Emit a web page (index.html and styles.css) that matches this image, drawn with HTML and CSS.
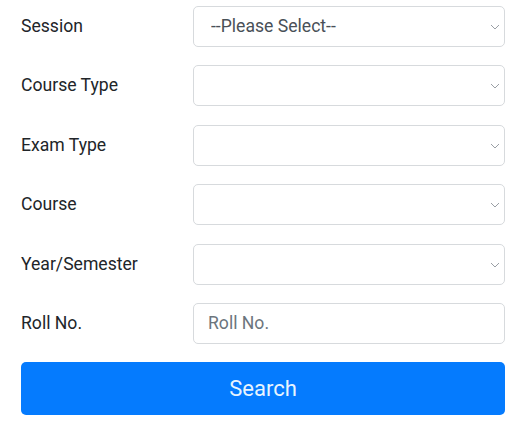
FILE: index.html
```html
<!DOCTYPE html>
<html>
<head>
<meta charset="utf-8">
<link rel="stylesheet" href="styles.css">
</head>
<body>
<form class="form">
  <label class="label" for="session">Session</label>
  <div class="select-wrap">
    <select id="session" class="control"><option>--Please Select--</option></select>
    <svg class="chev" width="10" height="6" viewBox="0 0 10 6"><path d="M1 1 L5 5 L9 1" fill="none" stroke="#9a9fa5" stroke-width="1"/></svg>
  </div>

  <label class="label" for="ctype">Course Type</label>
  <div class="select-wrap">
    <select id="ctype" class="control"><option></option></select>
    <svg class="chev" width="10" height="6" viewBox="0 0 10 6"><path d="M1 1 L5 5 L9 1" fill="none" stroke="#9a9fa5" stroke-width="1"/></svg>
  </div>

  <label class="label" for="etype">Exam Type</label>
  <div class="select-wrap">
    <select id="etype" class="control"><option></option></select>
    <svg class="chev" width="10" height="6" viewBox="0 0 10 6"><path d="M1 1 L5 5 L9 1" fill="none" stroke="#9a9fa5" stroke-width="1"/></svg>
  </div>

  <label class="label" for="course">Course</label>
  <div class="select-wrap">
    <select id="course" class="control"><option></option></select>
    <svg class="chev" width="10" height="6" viewBox="0 0 10 6"><path d="M1 1 L5 5 L9 1" fill="none" stroke="#9a9fa5" stroke-width="1"/></svg>
  </div>

  <label class="label" for="year">Year/Semester</label>
  <div class="select-wrap">
    <select id="year" class="control"><option></option></select>
    <svg class="chev" width="10" height="6" viewBox="0 0 10 6"><path d="M1 1 L5 5 L9 1" fill="none" stroke="#9a9fa5" stroke-width="1"/></svg>
  </div>

  <label class="label" for="roll">Roll No.</label>
  <div class="select-wrap">
    <input id="roll" class="control input" type="text" placeholder="Roll No.">
  </div>

  <button type="button" class="btn">Search</button>
</form>
</body>
</html>
```
FILE: styles.css
```css
html, body {
  margin: 0;
  padding: 0;
  background: #fff;
}
body {
  font-family: Roboto, "Noto Sans", sans-serif;
  color: #212529;
}
.form {
  display: grid;
  grid-template-columns: 172px 1fr;
  grid-template-rows: repeat(6, 41px) 53px;
  row-gap: 18.6px;
  padding: 5.5px 18px 0 21px;
}
.label {
  font-size: 17.6px;
  display: flex;
  align-items: center;
  color: #212529;
  padding-bottom: 1px;
}
.select-wrap {
  position: relative;
  height: 41px;
}
.control {
  -webkit-appearance: none;
  appearance: none;
  box-sizing: border-box;
  width: 100%;
  height: 41px;
  margin: 0;
  border: 1px solid #d7dadd;
  border-radius: 5px;
  background: #fff;
  font-family: Roboto, "Noto Sans", sans-serif;
  font-size: 17.6px;
  color: #495057;
  padding: 0 0 1px 17px;
  outline: none;
}
.input {
  padding-left: 14px;
}
.input::placeholder {
  color: #6c757d;
}
.chev {
  position: absolute;
  right: 5px;
  top: 18px;
  pointer-events: none;
}
.btn {
  grid-column: 1 / -1;
  height: 53px;
  margin-top: -0.6px;
  border: none;
  border-radius: 5px;
  background: #057bfe;
  color: #e8f4ff;
  font-family: Roboto, "Noto Sans", sans-serif;
  font-size: 22px;
  padding: 0;
}
```
